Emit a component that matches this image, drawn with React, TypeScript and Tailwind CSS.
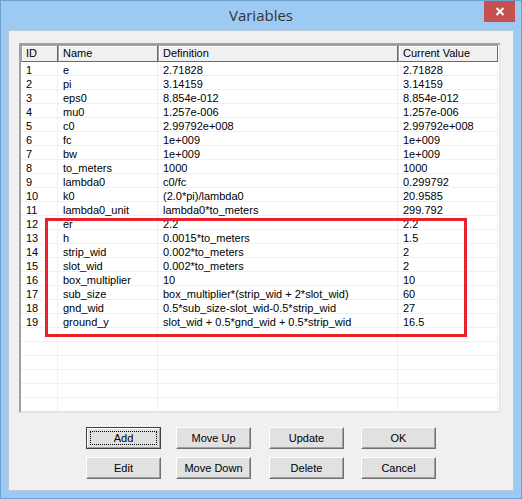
import React from "react";

const rows: [string, string, string, string][] = [
  ["1", "e", "2.71828", "2.71828"],
  ["2", "pi", "3.14159", "3.14159"],
  ["3", "eps0", "8.854e-012", "8.854e-012"],
  ["4", "mu0", "1.257e-006", "1.257e-006"],
  ["5", "c0", "2.99792e+008", "2.99792e+008"],
  ["6", "fc", "1e+009", "1e+009"],
  ["7", "bw", "1e+009", "1e+009"],
  ["8", "to_meters", "1000", "1000"],
  ["9", "lambda0", "c0/fc", "0.299792"],
  ["10", "k0", "(2.0*pi)/lambda0", "20.9585"],
  ["11", "lambda0_unit", "lambda0*to_meters", "299.792"],
  ["12", "er", "2.2", "2.2"],
  ["13", "h", "0.0015*to_meters", "1.5"],
  ["14", "strip_wid", "0.002*to_meters", "2"],
  ["15", "slot_wid", "0.002*to_meters", "2"],
  ["16", "box_multiplier", "10", "10"],
  ["17", "sub_size", "box_multiplier*(strip_wid + 2*slot_wid)", "60"],
  ["18", "gnd_wid", "0.5*sub_size-slot_wid-0.5*strip_wid", "27"],
  ["19", "ground_y", "slot_wid + 0.5*gnd_wid + 0.5*strip_wid", "16.5"],
  ["", "", "", ""],
  ["", "", "", ""],
  ["", "", "", ""],
  ["", "", "", ""],
  ["", "", "", ""],
  ["", "", "", ""],
];

function Btn({ label, def }: { label: string; def?: boolean }) {
  return (
    <div
      className={
        "w-[75px] h-[22px] bg-[#e1e1e1] flex items-center justify-center " +
        (def
          ? "border border-[#404040]"
          : "border border-t-white border-l-white border-r-[#707070] border-b-[#707070]")
      }
    >
      <div
        className={
          "w-full h-full flex items-center justify-center " +
          (def
            ? "border border-t-white border-l-white border-r-[#a0a0a0] border-b-[#a0a0a0] p-[2px]"
            : "border border-transparent border-r-[#a0a0a0] border-b-[#a0a0a0]")
        }
      >
        <div
          className={
            "w-full h-full flex items-center justify-center " +
            (def ? "border border-dotted border-black" : "")
          }
        >
          <span className="text-[11px] leading-none text-black">{label}</span>
        </div>
      </div>
    </div>
  );
}

export default function App() {
  return (
    <div
      className="relative w-[522px] h-[499px] bg-[#9dcaf2] border border-[#6d9fcf] flex flex-col"
      style={{ fontFamily: '"Liberation Sans", Arial, sans-serif' }}
    >
      <div className="h-[29px] flex items-center justify-center">
        <span
          className="text-[15px] text-[#333333]"
          style={{ fontFamily: '"Open Sans", "Noto Sans", sans-serif' }}
        >
          Variables
        </span>
      </div>
      <div className="absolute top-0 right-[6px] w-[31px] h-[21px] bg-[#c75050] flex items-center justify-center">
        <svg width="10" height="9" viewBox="0 0 10 9">
          <path d="M1.5 1 L8.5 8 M8.5 1 L1.5 8" stroke="white" strokeWidth="2" />
        </svg>
      </div>
      <div className="mx-[7px] mb-[7px] flex-1 bg-[#f0f0f0] border border-[#b9c9d8] flex flex-col pt-[12px] pl-[10px]">
        <div className="w-[482px] h-[370px] bg-white border-2 border-t-[#a0a0a0] border-l-[#a0a0a0] border-r-[#e8e8e8] border-b-[#e3e3e3] overflow-hidden">
          <div className="flex h-[17px] text-[11px] text-black">
            {[
              ["ID", "w-[37px]"],
              ["Name", "w-[100px]"],
              ["Definition", "w-[240px]"],
              ["Current Value", "w-[100px]"],
            ].map(([t, w]) => (
              <div
                key={t}
                className={`${w} h-full bg-[#f0f0f0] border border-t-[#a0a0a0] border-l-[#a0a0a0] border-r-[#696969] border-b-[#696969] flex items-center pl-[4px] shadow-[inset_1px_1px_0_#ffffff]`}
              >
                {t}
              </div>
            ))}
          </div>
          {rows.map((r, i) => (
            <div key={i} className="flex h-[14px] text-[11px] text-black leading-[13px]">
              <div className="w-[37px] border-r border-b border-[#f0f0f0] pl-[5px] pt-[2px] whitespace-nowrap">{r[0]}</div>
              <div className="w-[100px] border-r border-b border-[#f0f0f0] pl-[5px] pt-[2px] whitespace-nowrap">{r[1]}</div>
              <div className="w-[240px] border-r border-b border-[#f0f0f0] pl-[5px] pt-[2px] whitespace-nowrap">{r[2]}</div>
              <div className="w-[100px] border-r border-b border-[#f0f0f0] pl-[5px] pt-[2px] whitespace-nowrap">{r[3]}</div>
            </div>
          ))}
        </div>
        <div className="flex flex-col gap-[8px] mt-[14px] pl-[67px]">
          <div className="flex">
            <Btn label="Add" def />
            <div className="ml-[15px]"><Btn label="Move Up" /></div>
            <div className="ml-[18px]"><Btn label="Update" /></div>
            <div className="ml-[17px]"><Btn label="OK" /></div>
          </div>
          <div className="flex">
            <Btn label="Edit" />
            <div className="ml-[15px]"><Btn label="Move Down" /></div>
            <div className="ml-[18px]"><Btn label="Delete" /></div>
            <div className="ml-[17px]"><Btn label="Cancel" /></div>
          </div>
        </div>
      </div>
      <div className="absolute left-[44px] top-[217px] w-[422px] h-[119px] border-[3px] border-[#e8212b]" />
    </div>
  );
}
